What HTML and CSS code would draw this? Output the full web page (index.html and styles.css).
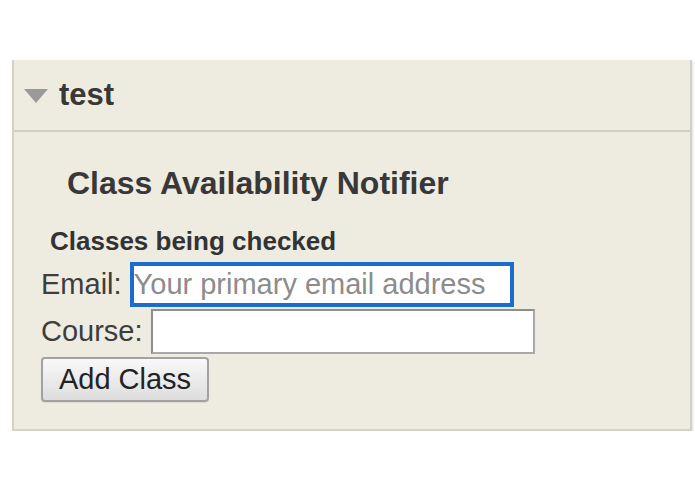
FILE: index.html
```html
<!DOCTYPE html>
<html>
<head>
<meta charset="utf-8">
<link rel="stylesheet" href="styles.css">
</head>
<body>
<div class="panel">
  <div class="panel-header">
    <svg class="caret" width="24" height="14" viewBox="0 0 24 14"><polygon points="0,0 24,0 12,14" fill="#9a9a9a"/></svg>
    <span class="panel-title">test</span>
  </div>
  <div class="panel-body">
    <h2 class="app-title">Class Availability Notifier</h2>
    <h4 class="sub-title">Classes being checked</h4>
    <div class="form-row">
      <label class="field-label">Email:</label>
      <input class="field-input focused" type="text" placeholder="Your primary email address">
    </div>
    <div class="form-row">
      <label class="field-label">Course:</label>
      <input class="field-input" type="text">
    </div>
    <button class="add-btn">Add Class</button>
  </div>
</div>
</body>
</html>
```

FILE: styles.css
```css
html, body {
  margin: 0;
  padding: 0;
  background: #ffffff;
  font-family: "Liberation Sans", Arial, sans-serif;
  color: #333333;
}

.panel {
  margin: 60px 0 0 12px;
  width: 676px;
  background: #eeebe1;
  border: 2px solid #d4d1c8;
  border-top: none;
  box-shadow: 1px 1px 2px rgba(0, 0, 0, 0.12);
}

.panel-header {
  height: 70px;
  display: flex;
  align-items: center;
  padding-left: 10px;
  border-bottom: 2px solid #d2cfc6;
}

.caret {
  display: block;
  margin-right: 11px;
  margin-top: 1px;
}

.panel-title {
  font-size: 31px;
  font-weight: bold;
  line-height: 36px;
  color: #383838;
}

.panel-body {
  padding: 0 0 27px 27px;
}

.app-title {
  margin: 33px 0 0 26px;
  font-size: 32px;
  font-weight: bold;
  line-height: 36px;
  color: #383838;
}

.sub-title {
  margin: 25px 0 0 9px;
  font-size: 26px;
  font-weight: bold;
  line-height: 30px;
  color: #333333;
}

.form-row {
  display: flex;
  align-items: center;
  gap: 8px;
  height: 45px;
  margin-top: 6px;
}

.form-row + .form-row {
  margin-top: 2px;
}

.field-label {
  font-size: 29px;
  line-height: 34px;
  color: #3d3d3d;
  margin-top: -1px;
}

.field-input {
  box-sizing: border-box;
  width: 384px;
  height: 45px;
  margin: 0;
  padding: 0 1px 0 2px;
  font-family: "Liberation Sans", Arial, sans-serif;
  font-size: 29px;
  color: #333333;
  background: #ffffff;
  border: 2px solid #a8a8a8;
  border-top-color: #8e8e8e;
  border-left-color: #8e8e8e;
  border-radius: 0;
  outline: none;
}

.field-input.focused {
  border: 4px solid #1a6ccd;
  padding-left: 0;
}

.field-input::placeholder {
  color: #8c8c8c;
}

.add-btn {
  display: block;
  box-sizing: border-box;
  margin-top: 3px;
  width: 168px;
  height: 45px;
  padding: 0;
  font-family: "Liberation Sans", Arial, sans-serif;
  font-size: 29px;
  color: #222222;
  background: linear-gradient(#f9f9f9, #dddddd);
  border: 2px solid #a2a2a2;
  border-radius: 4px;
  box-shadow: 0 1px 1px rgba(0, 0, 0, 0.08);
}
```
